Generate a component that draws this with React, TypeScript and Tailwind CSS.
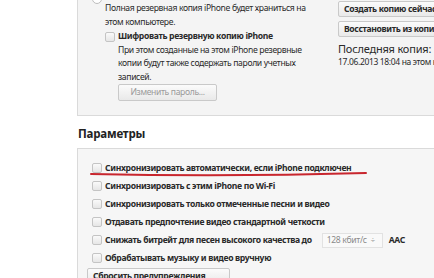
import React from "react";

const Check = () => (
  <span className="inline-block w-[10px] h-[10px] shrink-0 rounded-[2px] border border-[#c4c4c4] bg-gradient-to-b from-[#fafafa] to-[#e6e6e6]" />
);

const Btn = ({ children, className = "" }: { children: React.ReactNode; className?: string }) => (
  <div
    className={`h-[16px] flex items-center px-[5px] rounded-[2px] border border-[#c9c9c9] bg-gradient-to-b from-[#fbfbfb] to-[#e9e9e9] font-bold text-[8.6px] whitespace-nowrap ${className}`}
  >
    {children}
  </div>
);

const rows = [
  "Синхронизировать автоматически, если iPhone подключен",
  "Синхронизировать с этим iPhone по Wi-Fi",
  "Синхронизировать только отмеченные песни и видео",
  "Отдавать предпочтение видео стандартной четкости",
];

export default function App() {
  return (
    <div
      className="w-[434px] h-[278px] overflow-hidden bg-white text-[#2a2a2a] pl-[77px] tracking-[-0.35px]"
      style={{ fontFamily: '"Noto Sans", "Open Sans", sans-serif' }}
    >
      {/* backup panel */}
      <div className="-mt-[6px] h-[122px] bg-[#f4f4f4] border-l border-b border-[#dadada] flex">
        <div className="w-[260px] shrink-0 pl-[14px] flex">
          <span className="w-[10px] h-[10px] rounded-full border border-[#bdbdbd] bg-white shrink-0" />
          <div className="ml-[3px] pt-[8px] text-[8.6px] leading-[13.5px]">
            <div className="whitespace-nowrap">Полная резервная копия iPhone будет храниться на</div>
            <div>этом компьютере.</div>
            <div className="mt-[1px] flex items-center gap-[3px]">
              <Check />
              <span className="font-bold whitespace-nowrap">Шифровать резервную копию iPhone</span>
            </div>
            <div className="pl-[13px] whitespace-nowrap">
              <div>При этом созданные на этом iPhone резервные</div>
              <div>копии будут также содержать пароли учетных</div>
              <div>записей.</div>
              <Btn className="h-[17px] w-[99px] justify-center text-[#9a9a9a] font-normal">Изменить пароль...</Btn>
            </div>
          </div>
        </div>
        <div className="w-[120px] shrink-0 pt-[7px]">
          <Btn className="w-[120px]">Создать копию сейчас</Btn>
          <Btn className="w-[120px] mt-[4px]">Восстановить из копии</Btn>
          <div className="mt-[5px] text-[11px] leading-[14px] whitespace-nowrap tracking-[-0.2px]">Последняя копия:</div>
          <div className="text-[8.5px] leading-[12px] whitespace-nowrap">17.06.2013 18:04 на этом компьютере</div>
        </div>
      </div>

      <div className="mt-[10px] pl-[1px] font-bold text-[11.5px] leading-[16px] text-[#222] tracking-[-0.2px]">Параметры</div>

      {/* settings panel */}
      <div className="mt-[6px] relative h-[140px] bg-[#f6f6f6] border-l border-t border-[#dadada] pl-[14px] pt-[10px] text-[8.6px] font-bold leading-[12px]">
        {rows.map((r) => (
          <div key={r} className="h-[18px] flex items-center gap-[3px] whitespace-nowrap">
            <Check />
            <span>{r}</span>
          </div>
        ))}
        <div className="h-[18px] flex items-center whitespace-nowrap">
          <Check />
          <span className="ml-[3px]">Снижать битрейт для песен высокого качества до</span>
          <div className="ml-[10px] h-[15px] w-[61px] flex items-center gap-[4px] px-[4px] border border-[#e2e2e2] bg-[#f9f9f9] font-normal text-[#8a8a8a]">
            <span>128 кбит/с</span>
            <span className="text-[7.5px]">÷</span>
          </div>
          <span className="ml-[6px]">AAC</span>
        </div>
        <div className="h-[18px] flex items-center gap-[3px] whitespace-nowrap">
          <Check />
          <span>Обрабатывать музыку и видео вручную</span>
        </div>
        <Btn className="mt-[1px] -ml-[5px] w-[143px]">Сбросить предупреждения</Btn>

        <svg className="absolute left-[12px] top-[22px]" width="278" height="8" viewBox="0 0 278 8">
          <path d="M1 3 Q 137 6 276 2" stroke="#c8262e" strokeWidth="2" fill="none" strokeLinecap="round" />
        </svg>
      </div>
    </div>
  );
}
